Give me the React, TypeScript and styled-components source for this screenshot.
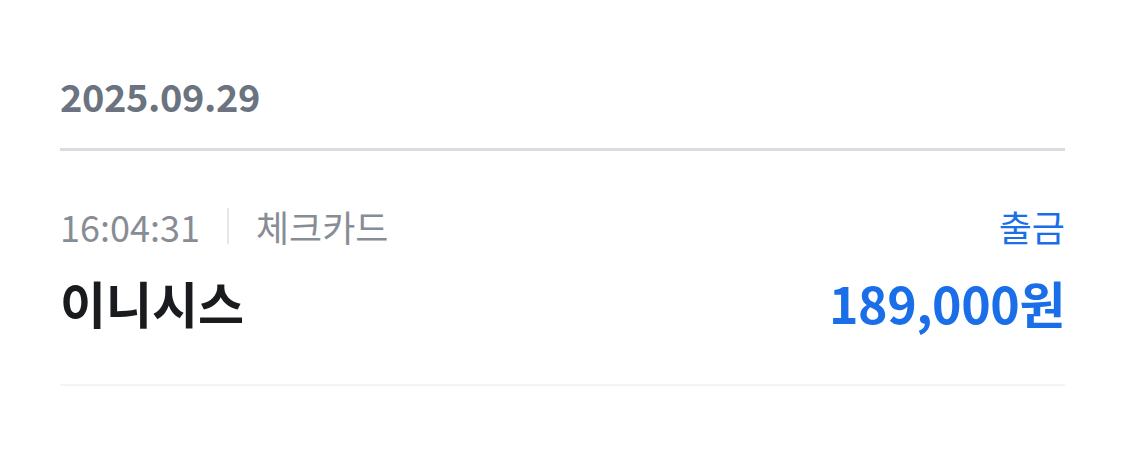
import styled, { createGlobalStyle } from 'styled-components';

const GlobalStyle = createGlobalStyle`
  html, body {
    margin: 0;
    padding: 0;
    background: #fff;
  }
  body {
    font-family: 'Noto Sans CJK KR', 'Noto Sans', sans-serif;
  }
`;

const Page = styled.div`
  width: 1125px;
  height: 476px;
  box-sizing: border-box;
  padding: 70px 60px 0;
  background: #fff;
`;

const DateHeader = styled.div`
  padding-bottom: 26px;
  border-bottom: 3px solid #d9dce1;
  font-size: 38px;
  font-weight: 700;
  line-height: 52px;
  color: #6b7280;
  letter-spacing: -0.4px;
`;

const Row = styled.div`
  display: flex;
  flex-direction: column;
  gap: 22px;
  padding: 51px 0 52px;
  border-bottom: 2px solid #f3f4f6;
`;

const Line = styled.div`
  display: flex;
  justify-content: space-between;
  align-items: center;
`;

const Meta = styled.div`
  display: flex;
  align-items: center;
  gap: 27px;
  font-size: 36px;
  line-height: 48px;
  color: #878d95;
`;

const Divider = styled.span`
  width: 2px;
  height: 36px;
  background: #e3e6ea;
`;

const Kind = styled.span`
  font-size: 36px;
  line-height: 48px;
  color: #1a6fe8;
`;

const Merchant = styled.span`
  font-size: 50px;
  font-weight: 700;
  line-height: 60px;
  color: #191b1f;
`;

const Amount = styled.span`
  font-size: 50px;
  font-weight: 700;
  line-height: 60px;
  color: #1a6fe8;
  letter-spacing: -0.4px;
`;

export default function App() {
  return (
    <>
      <GlobalStyle />
      <Page>
        <DateHeader>2025.09.29</DateHeader>
        <Row>
          <Line>
            <Meta>
              <span>16:04:31</span>
              <Divider />
              <span>체크카드</span>
            </Meta>
            <Kind>출금</Kind>
          </Line>
          <Line>
            <Merchant>이니시스</Merchant>
            <Amount>189,000원</Amount>
          </Line>
        </Row>
      </Page>
    </>
  );
}
